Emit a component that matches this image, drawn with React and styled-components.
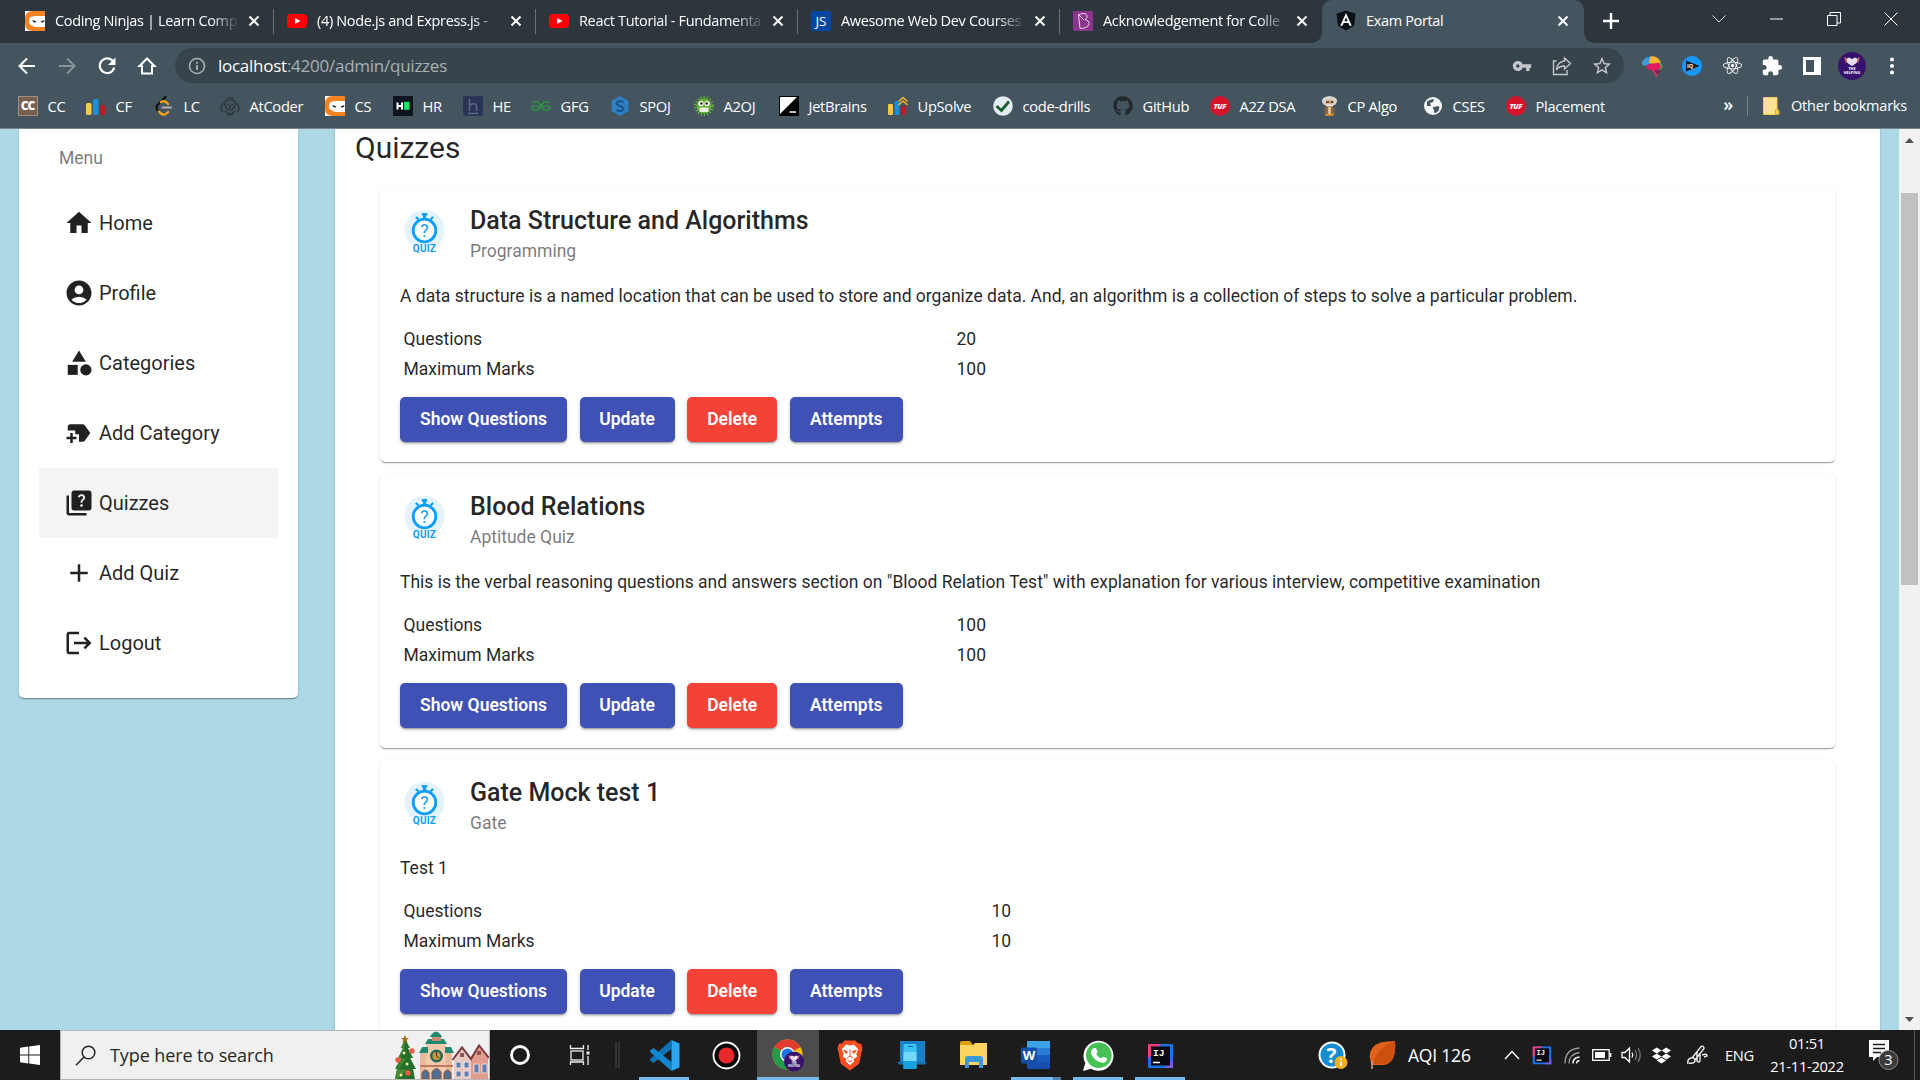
import React from 'react';
import styled, { createGlobalStyle, css } from 'styled-components';
import { MdHome, MdAccountCircle, MdCategory, MdNewLabel, MdQuiz, MdAdd, MdLogout, MdExtension, MdVpnKey, MdStarBorder } from 'react-icons/md';
import { FaDropbox, FaReact, FaGithub } from 'react-icons/fa';
import { SiGeeksforgeeks } from 'react-icons/si';

const GlobalStyle = createGlobalStyle`
  * { box-sizing: border-box; }
  body { margin: 0; overflow: hidden; background: #add8e6; }
  svg { display: block; flex: none; }
`;

const ui = css`
  font-family: 'Open Sans', 'Noto Sans', sans-serif;
  white-space: nowrap;
`;

const Screen = styled.div`
  width: 1920px;
  height: 1080px;
  display: flex;
  flex-direction: column;
  overflow: hidden;
`;

/* ---------- browser chrome ---------- */

const TabStrip = styled.div`
  ${ui}
  height: 43px;
  flex: none;
  display: flex;
  padding-left: 12px;
  background: #2d363c;
  color: #fff;
`;

const Tab = styled.div`
  width: 262px;
  height: 43px;
  display: flex;
  align-items: center;
  padding: 0 ${(p) => (p.$active ? 15 : 14)}px 2px ${(p) => (p.$active ? 14 : 13)}px;
  position: relative;
  background: ${(p) => (p.$active ? '#45555f' : 'transparent')};
  border-radius: 10px 10px 0 0;
  &::after {
    content: '';
    display: ${(p) => (p.$divider ? 'block' : 'none')};
    position: absolute;
    right: 0;
    top: 9px;
    width: 1px;
    height: 25px;
    background: #6b7479;
  }
`;

const TabFoot = styled.span`
  position: absolute;
  bottom: 0;
  ${(p) => (p.$side === 'left' ? 'left: -10px' : 'right: -10px')};
  width: 10px;
  height: 10px;
  background: radial-gradient(circle at ${(p) => (p.$side === 'left' ? '0 0' : '100% 0')}, transparent 9.5px, #45555f 10px);
`;

const TabTitle = styled.span`
  flex: 1;
  min-width: 0;
  margin: 0 8px 0 10px;
  overflow: hidden;
  font-size: 14.5px;
  letter-spacing: -0.34px;
  mask-image: ${(p) => (p.$fade ? 'linear-gradient(to right, #000 84%, transparent 100%)' : 'none')};
`;

const NewTab = styled.div`
  width: 54px;
  display: grid;
  place-items: center;
  padding-bottom: 1px;
`;

const WindowControls = styled.div`
  margin-left: auto;
  display: flex;
  padding-bottom: 5px;
`;

const WindowButton = styled.div`
  width: 57.5px;
  display: grid;
  place-items: center;
`;

const Toolbar = styled.div`
  height: 44px;
  flex: none;
  display: flex;
  align-items: center;
  padding: 1px 8px 0 7px;
  background: #45555f;
`;

const ToolSlot = styled.div`
  width: 40px;
  display: grid;
  place-items: center;
  color: ${(p) => p.$color || '#fff'};
`;

const AddressBar = styled.div`
  ${ui}
  width: 1450px;
  height: 35px;
  margin: 0 8px;
  display: flex;
  align-items: center;
  padding: 0 2px 0 2px;
  border-radius: 18px;
  background: #38444b;
`;

const Url = styled.span`
  flex: 1;
  margin-left: 1px;
  font-size: 17px;
  letter-spacing: -0.25px;
  color: #aab0b4;
  b { font-weight: 400; color: #fff; }
`;

const BookmarkBar = styled.div`
  ${ui}
  height: 42px;
  flex: none;
  display: flex;
  align-items: center;
  padding: 0 0 4px 18px;
  background: #45555f;
  border-bottom: 1px solid #76838b;
  color: #fff;
`;

const Bookmark = styled.div`
  width: ${(p) => p.$w}px;
  flex: none;
  display: flex;
  align-items: center;
  gap: 9.5px;
  font-size: 14.7px;
  letter-spacing: -0.3px;
`;

const BookmarkTail = styled.div`
  margin-left: auto;
  display: flex;
  align-items: center;
  font-size: 14.5px;
  letter-spacing: -0.2px;
  padding-right: 13px;
`;

const Chevrons = styled.span`
  font-size: 18px;
  font-weight: 600;
  padding-bottom: 4px;
  margin-right: 14px;
`;

const TailDivider = styled.span`
  width: 1px;
  height: 20px;
  margin-right: 15px;
  background: #76838b;
`;

const TailLabel = styled.span`
  margin-left: 11px;
`;

/* ---------- page ---------- */

const Viewport = styled.div`
  height: 901px;
  flex: none;
  display: flex;
  overflow: hidden;
  background: #add8e6;
  font-family: Roboto, sans-serif;
  color: rgba(0, 0, 0, 0.87);
`;

const cardShadow = css`
  box-shadow: 0 2px 1px -1px rgba(0, 0, 0, 0.2), 0 1px 1px 0 rgba(0, 0, 0, 0.14), 0 1px 3px 0 rgba(0, 0, 0, 0.12);
`;

const Sidebar = styled.nav`
  ${cardShadow}
  width: 279px;
  height: 569px;
  margin-left: 19px;
  flex: none;
  padding: 0 20px;
  background: #fff;
  border-radius: 0 0 5px 5px;
`;

const MenuLabel = styled.div`
  height: 59px;
  padding: 0 20px;
  line-height: 58px;
  font-size: 17.5px;
  color: rgba(0, 0, 0, 0.54);
`;

const MenuItem = styled.div`
  height: 70px;
  display: flex;
  align-items: center;
  gap: 5px;
  padding-left: 25px;
  font-size: 20px;
  background: ${(p) => (p.$active ? '#f4f4f4' : 'transparent')};
  svg { width: 30px; height: 30px; }
`;

const Main = styled.main`
  ${cardShadow}
  width: 1545px;
  height: 960px;
  margin-left: 37px;
  flex: none;
  padding: 0 45px;
  background: #fff;
`;

const PageTitle = styled.h1`
  height: 59px;
  margin: 0 0 0 -25px;
  line-height: 38px;
  font-size: 30px;
  font-weight: 400;
`;

const QuizList = styled.div`
  display: flex;
  flex-direction: column;
  gap: 12px;
`;

const QuizCard = styled.article`
  ${cardShadow}
  height: 274px;
  flex: none;
  padding: 20px;
  background: #fff;
  border-radius: 5px;
`;

const CardHeader = styled.header`
  display: flex;
  height: 63px;
`;

const Heading = styled.div`
  margin-left: 20px;
`;

const CardTitle = styled.h2`
  margin: 0;
  font-size: 25px;
  font-weight: 500;
  line-height: 25px;
`;

const CardSubtitle = styled.div`
  margin-top: 8px;
  font-size: 17.5px;
  line-height: 20px;
  color: rgba(0, 0, 0, 0.54);
`;

const Description = styled.p`
  margin: 12px 0 15px;
  font-size: 17.5px;
  line-height: 26px;
  white-space: nowrap;
`;

const Facts = styled.dl`
  display: grid;
  grid-template-columns: ${(p) => p.$col}px 1fr;
  margin: 0 0 13px 3.5px;
  font-size: 17.5px;
  line-height: 30px;
  dt, dd { margin: 0; }
`;

const Actions = styled.div`
  display: flex;
  gap: 12.6px;
`;

const ActionButton = styled.button`
  height: 45px;
  width: ${(p) => p.$w}px;
  padding: 0;
  border: 0;
  border-radius: 5px;
  background: ${(p) => (p.$warn ? '#f44336' : '#3f51b5')};
  color: #fff;
  font: 600 17.5px/45px Roboto, sans-serif;
  box-shadow: 0 3px 1px -2px rgba(0, 0, 0, 0.2), 0 2px 2px 0 rgba(0, 0, 0, 0.14), 0 1px 5px 0 rgba(0, 0, 0, 0.12);
`;

const Scrollbar = styled.div`
  width: 21px;
  height: 901px;
  margin-left: auto;
  flex: none;
  display: flex;
  flex-direction: column;
  align-items: center;
  background: #f1f1f1;
`;

const ScrollThumb = styled.div`
  width: 17px;
  height: 392px;
  margin: 50px 0 auto;
  background: #c1c1c1;
`;

const ScrollArrow = styled.svg`
  margin-top: ${(p) => (p.$down ? 0 : 9)}px;
  margin-bottom: ${(p) => (p.$down ? 8 : 0)}px;
`;

/* ---------- taskbar ---------- */

const Taskbar = styled.footer`
  ${ui}
  height: 50px;
  flex: none;
  display: flex;
  background: #1c1c1c;
  color: #fff;
`;

const StartButton = styled.div`
  width: 60px;
  display: grid;
  place-items: center;
`;

const SearchBox = styled.div`
  width: 430px;
  display: flex;
  align-items: center;
  padding-left: 14px;
  border: 1px solid #b5b5b5;
  background: #f0f0f0;
  color: #262626;
  font-size: 18px;
  letter-spacing: -0.1px;
  span { margin-left: 14px; flex: 1; padding-bottom: 1px; }
`;

const ShellSlot = styled.div`
  width: ${(p) => p.$w}px;
  margin-right: ${(p) => p.$mr || 0}px;
  display: grid;
  place-items: center;
`;

const AppSlot = styled.div`
  width: ${(p) => (p.$active ? 62 : 50)}px;
  margin: 0 ${(p) => (p.$active ? 0 : 6)}px;
  display: grid;
  place-items: center;
  background: ${(p) => (p.$active ? '#4c4c4c' : 'transparent')};
  border-bottom: 3px solid ${(p) => (p.$running ? '#76b9ed' : 'transparent')};
  padding-top: 3px;
  ${(p) => p.$stacked && css`border-image: linear-gradient(to right, #76b9ed 80%, #5484a9 80%) 3;`}
`;

const Tray = styled.div`
  margin-left: auto;
  display: flex;
  align-items: center;
  font-size: 17.5px;
`;

const TraySlot = styled.div`
  width: ${(p) => p.$w}px;
  display: grid;
  place-items: center;
`;

const Weather = styled.span`
  width: 91px;
  padding-left: 2px;
  letter-spacing: -0.2px;
`;

const Language = styled.span`
  width: 42px;
  padding-left: 8px;
  font-size: 14.7px;
  letter-spacing: -0.3px;
`;

const Clock = styled.div`
  width: 96px;
  text-align: center;
  font-size: 14.7px;
  line-height: 23px;
  padding-bottom: 1px;
  letter-spacing: -0.3px;
`;

const ShowDesktop = styled.div`
  width: 6px;
  height: 50px;
  border-left: 1px solid #5a5a5a;
`;

/* ---------- glyphs ---------- */

const iconFont = "'Open Sans', sans-serif";

const Ninjas = () => (
  <svg width="20" height="20" viewBox="0 0 20 20">
    <rect width="20" height="20" fill="#fff" />
    <path d="M20 0H8Q0 0 0 8v4q0 8 8 8h12v-4H11q-4 0-4-3V8q0-3 4-3h9z" fill="#f58220" />
    <rect x="4" y="5.500" width="16" height="9" rx="4" fill="#fff" />
    <path d="M7.500 9l4 1.500-1.500 1.300-2-1zM19.500 9l-4 1.500 1.500 1.300 2-1z" fill="#222" />
  </svg>
);

const YouTube = () => (
  <svg width="20" height="20" viewBox="0 0 20 20">
    <rect y="3" width="20" height="14" rx="3.500" fill="#f00" />
    <path d="M8 7l5.500 3L8 13z" fill="#fff" />
  </svg>
);

const JsBadge = () => (
  <svg width="20" height="20" viewBox="0 0 20 20">
    <rect width="20" height="20" rx="2" fill="#0747a1" />
    <text x="10" y="15" fontSize="13.500" textAnchor="middle" fill="#fff" fontFamily={iconFont}>JS</text>
  </svg>
);

const BBadge = () => (
  <svg width="20" height="20" viewBox="0 0 20 20">
    <rect width="20" height="20" fill="#8a348c" />
    <path d="M5.500 3.500L10 2.500q4.500 0 4 3.500-.3 2-2 2.500 4 .5 4 4-.5 4-4.500 4.500L7 17.500zM6 4l5 5" fill="none" stroke="#eacfeb" strokeWidth="1" />
  </svg>
);

const AngularMark = () => (
  <svg width="20" height="21" viewBox="0 0 21 21">
    <path d="M10.500 0L20.500 3.500 19 16l-8.500 5L2 16 .5 3.500z" fill="#0d1016" />
    <path d="M10.500 2.500L4.500 16h2.300l1.200-3h5l1.200 3h2.300zm0 4.500l1.700 4.200H8.800z" fill="#fff" />
  </svg>
);

const Close = () => (
  <svg width="12" height="12" viewBox="0 0 12 12"><path d="M1.500 1.500l9 9M10.500 1.500l-9 9" stroke="#fff" strokeWidth="2" /></svg>
);

const Arrow = ({ flip }) => (
  <svg width="20" height="20" viewBox="0 0 20 20">
    <g transform={flip ? 'rotate(180 10 10)' : undefined} fill="none" stroke="currentColor" strokeWidth="2">
      <path d="M18 10H3M10 2.500L2.500 10l7.500 7.500" />
    </g>
  </svg>
);

const Reload = () => (
  <svg width="20" height="20" viewBox="0 0 20 20">
    <path d="M16.300 5.800A7.300 7.300 0 1 0 17.200 11.500" fill="none" stroke="currentColor" strokeWidth="2.200" />
    <path d="M18.500 1.500v7.500H11z" fill="currentColor" />
  </svg>
);

const HomeOutline = () => (
  <svg width="20" height="20" viewBox="0 0 20 20">
    <path d="M10 2.500L2.500 10H5v7.500h10V10h2.500z" fill="none" stroke="currentColor" strokeWidth="2" />
  </svg>
);

const Info = () => (
  <svg width="18" height="18" viewBox="0 0 18 18" fill="none" stroke="currentColor">
    <circle cx="9" cy="9" r="7.500" strokeWidth="1.600" /><path d="M9 8v5M9 5v1.800" strokeWidth="1.800" />
  </svg>
);

const Share = () => (
  <svg width="20" height="20" viewBox="0 0 20 20" fill="none" stroke="currentColor" strokeWidth="1.400">
    <path d="M4.500 5H1.500v13.500H15V14" /><path d="M12.500 2l6 5.500-6 5.500V10Q7 10 4.500 14 5 6 12.500 5z" />
  </svg>
);

const Brain = () => (
  <svg width="22" height="22" viewBox="0 0 22 22">
    <path d="M1 9Q1 2 10 1.500L9 9l-6 2z" fill="#3f9ad8" />
    <path d="M9.500 1.500Q17 0 20 8l-8 3-4-4z" fill="#f8b72c" />
    <path d="M19 7q4 4 1.500 7l-4 1z" fill="#4aa84c" />
    <path d="M5 12Q7 8 13 8.500l5-1 2 5q-2 3-6 2.500-6 1-9-3z" fill="#e11a61" />
    <path d="M11 15.500h9q-1 3-6 3.500z" fill="#8d1a54" />
    <path d="M12 15l4 6.500" stroke="#e33b50" strokeWidth="1.600" />
  </svg>
);

const PlayBadge = () => (
  <svg width="20" height="20" viewBox="0 0 20 20">
    <circle cx="10" cy="10" r="10" fill="#1798ff" />
    <path d="M4 4.500L17.500 10 4 15.500z" fill="#101820" />
    <text x="8" y="12" fontSize="5.500" fontWeight="700" textAnchor="middle" fill="#fff" fontFamily={iconFont}>IQ</text>
  </svg>
);

const SidePanel = () => (
  <svg width="18" height="18" viewBox="0 0 18 18"><path d="M0 0h18v18H0zM3 3v12h8V3z" fill="#fff" fillRule="evenodd" /></svg>
);

const ProfileBadge = ({ size = 28 }) => (
  <svg width={size} height={size} viewBox="0 0 28 28">
    <circle cx="14" cy="14" r="14" fill="#37116e" />
    <path d="M8 7l3-1.500 3 1.500 3-1.500 3 1.500-1.500 4-4.500 3-4.500-3z" fill="#e6e0ee" />
    <path d="M7 5.500l1.500 5M21 5.500l-1.500 5" stroke="#e76a50" strokeWidth="1.500" />
    <text x="14" y="18" fontSize="3.800" fontWeight="700" textAnchor="middle" fill="#fff" fontFamily={iconFont}>THE</text>
    <text x="14" y="22" fontSize="3.800" fontWeight="700" textAnchor="middle" fill="#fff" fontFamily={iconFont}>HELPING</text>
  </svg>
);

const Dots = () => (
  <svg width="6" height="18" viewBox="0 0 6 18" fill="#fff"><circle cx="3" cy="2.500" r="2" /><circle cx="3" cy="9" r="2" /><circle cx="3" cy="15.500" r="2" /></svg>
);

const CcBadge = () => (
  <svg width="20" height="20" viewBox="0 0 20 20">
    <rect width="20" height="20" fill="#79604e" /><rect x=".5" y=".5" width="19" height="19" fill="none" stroke="#a18d7d" />
    <text x="9.500" y="14" fontSize="12" fontWeight="800" textAnchor="middle" fill="#fff" fontFamily={iconFont} letterSpacing="-1">CC</text>
  </svg>
);

const Bars = () => (
  <svg width="20" height="20" viewBox="0 0 20 20">
    <rect y="7" width="5.500" height="12" rx="1.500" fill="#f7ca48" /><rect x="7" y="3" width="5.500" height="16" rx="1.500" fill="#1b8fd3" /><rect x="14" y="9" width="5.500" height="10" rx="1.500" fill="#b71f28" />
  </svg>
);

const LeetMark = () => (
  <svg width="20" height="20" viewBox="0 0 20 20" fill="none" strokeLinecap="round">
    <path d="M11.500 1L3.500 9q-2 2.500 0 5l2 2" stroke="#111" strokeWidth="2.200" />
    <path d="M7 6q3-2 6 1l1 1M5 15.500l2 2q3 2.500 6-.5l1-1" stroke="#f5a21b" strokeWidth="2.400" />
    <path d="M8.500 11.500H17" stroke="#b3b3b3" strokeWidth="2" />
  </svg>
);

const AtMark = () => (
  <svg width="20" height="20" viewBox="0 0 20 20" fill="none" stroke="#2d373d">
    <path d="M6 3q4-3 8 0M5 5.500q5-3 10 0v4q-1 4-5 4.500-4-.5-5-4.500z" strokeWidth="1.500" />
    <path d="M4 7Q1 9 1 14l2 2M16 7q3 2 3 7l-2 2M7 8.500h2M11 8.500h2M10 9v3M5 15l5 3.500 5-3.500M7 18.500h6" strokeWidth="1.500" />
  </svg>
);

const HrBadge = () => (
  <svg width="20" height="20" viewBox="0 0 20 20">
    <rect width="20" height="20" fill="#0c1420" /><path d="M4.500 6.500v7M9 6.500v7M4.500 10H9" stroke="#fff" strokeWidth="2" /><rect x="11" y="5.800" width="5.500" height="8" fill="#11e868" />
  </svg>
);

const HeBadge = () => (
  <svg width="20" height="20" viewBox="0 0 20 20">
    <rect width="20" height="20" rx="2" fill="#2c3454" /><path d="M6.500 3v12M6.500 9q7-3 7 1.500V15M5 17.500h10" fill="none" stroke="#5c6690" strokeWidth="1.500" />
  </svg>
);

const SpojMark = () => (
  <svg width="20" height="20" viewBox="0 0 20 20">
    <path d="M10 0l8.500 5v10L10 20l-8.500-5V5z" fill="#2f7fc3" /><path d="M13.500 6.500Q10 3.800 7.500 6T10 10t2.500 4.200Q10 16 6.500 13.800" fill="none" stroke="#1c4f86" strokeWidth="2" />
  </svg>
);

const Monster = () => (
  <svg width="20" height="20" viewBox="0 0 20 20">
    <circle cx="10" cy="10" r="7.500" fill="#68b33a" /><circle cx="10" cy="10" r="8.700" fill="none" stroke="#68b33a" strokeWidth="2.400" strokeDasharray="1.300 1.800" />
    <circle cx="7" cy="7.500" r="2.600" fill="#fff" /><circle cx="13" cy="7.500" r="2.600" fill="#fff" /><circle cx="7.300" cy="7.500" r="1.300" fill="#222" /><circle cx="12.700" cy="7.500" r="1.300" fill="#222" />
    <rect x="5.500" y="11.500" width="9" height="4.500" rx="1" fill="#e9f3e0" />
  </svg>
);

const JbMark = () => (
  <svg width="20" height="20" viewBox="0 0 20 20"><rect width="20" height="20" fill="#000" /><path d="M1 1h17L1 18z" fill="#fff" /><path d="M10.500 16h6.500" stroke="#fff" strokeWidth="1.500" /></svg>
);

const UpMark = () => (
  <svg width="20" height="20" viewBox="0 0 20 20">
    <rect y="8" width="5" height="11" rx="1" fill="#f6c544" /><rect x="6.500" y="5" width="5" height="14" rx="1" fill="#1b8fd3" /><rect x="13" y="10" width="5" height="9" rx="1" fill="#b71f28" />
    <path d="M10.500 5.500L15 1.500l4.500 4M10.500 9L15 5l4.500 4" fill="none" stroke="#f3b52e" strokeWidth="1.500" />
  </svg>
);

const CheckMark = () => (
  <svg width="20" height="20" viewBox="0 0 20 20"><circle cx="10" cy="10" r="9.800" fill="#e4eef2" /><path d="M3.500 10l5 4.500L16 5.500" fill="none" stroke="#17602b" strokeWidth="2.800" /></svg>
);

const Tuf = () => (
  <svg width="20" height="20" viewBox="0 0 20 20"><circle cx="10" cy="10" r="10" fill="#d5132b" /><text x="9.800" y="12.800" fontSize="7.500" fontWeight="800" fontStyle="italic" textAnchor="middle" fill="#fff" fontFamily={iconFont}>TUF</text></svg>
);

const Einstein = () => (
  <svg width="17" height="20" viewBox="0 0 17 20">
    <path d="M1 6Q0 1 8.500 0 17 1 16 6l-2 3H3z" fill="#d6d6d2" /><rect x="4.500" y="3.500" width="8" height="7.500" rx="2" fill="#e2b48d" /><path d="M5 6h3M9.500 6h3" stroke="#333" strokeWidth="1.500" /><path d="M5 8.500h7v1.500H5z" fill="#eee" />
    <path d="M3.500 12l3-1.500h4l3 1.500v6h-10z" fill="#8a6540" /><path d="M8.500 11v7" stroke="#e6d3a0" strokeWidth="2.500" /><path d="M4.500 18.800h8" stroke="#e2902f" strokeWidth="2" />
  </svg>
);

const Globe = () => (
  <svg width="20" height="20" viewBox="0 0 20 20"><circle cx="10" cy="10" r="9" fill="#f4f6f7" /><path d="M4 5.500q4-3 7-2.500l-1 3-3 1 1 3H4zM9.500 11.500l5-1.500 2 1-1 4-4 2.500-.5-3.500z" fill="#45555f" /></svg>
);

const Folder = () => (
  <svg width="17" height="20" viewBox="0 0 17 20"><path d="M.5 1.500H14V14l2 1v3.500H.5z" fill="#fde293" stroke="#f2cc4c" /><path d="M12.500 18v-4l3-.5v5z" fill="#f5d869" stroke="#cfa62c" /></svg>
);

const QuizLogo = () => (
  <svg width="50" height="50" viewBox="0 0 50 50">
    <circle cx="24.500" cy="22" r="20" fill="#e3f2fd" />
    <path d="M2 36.500h45v8H2z" fill="#fff" />
    <circle cx="24.500" cy="22.500" r="11.300" fill="#fff" stroke="#0d9dfa" strokeWidth="2.800" />
    <path d="M21.800 5h5.500v2.500h-1.300V10h-3V7.500h-1.200z" fill="#0d9dfa" /><path d="M15.800 9l2.600 2.300M33.200 9l-2.600 2.300" stroke="#0d9dfa" strokeWidth="2.200" />
    <text x="24.500" y="28.700" fontSize="17.500" textAnchor="middle" fill="#0d9dfa" fontFamily="Roboto, sans-serif">?</text>
    <text x="24.500" y="44" fontSize="10" fontWeight="700" letterSpacing=".2" textAnchor="middle" fill="#0d9dfa" fontFamily="Roboto, sans-serif">QUIZ</text>
  </svg>
);

const Windows = () => (
  <svg width="20" height="20" viewBox="0 0 20 20" fill="#fff"><path d="M0 2.800L8.300 1.600v8H0zM9.200 1.500L20 0v9.600H9.200zM0 10.500h8.300v8L0 17.300zM9.200 10.500H20V20L9.200 18.600z" /></svg>
);

const SearchGlyph = () => (
  <svg width="21" height="21" viewBox="0 0 21 21" fill="none" stroke="#222" strokeWidth="1.500"><circle cx="13.500" cy="7.500" r="6.300" /><path d="M9 12L1 20.200" /></svg>
);

const Village = () => (
  <svg width="94" height="48" viewBox="0 0 94 48">
    <path d="M10 8l5 9h-2l5 10h-3l6 11h-3l2 10H0l2-10h-2l6-11H3l5-10H6z" fill="#24702a" />
    <path d="M10 8l-4 9 4 1-5 9 6 1-8 10 9 1-10 9H0l2-10 5-11-3 0 5-10z" fill="#4a8a32" />
    <path d="M10 4l1.300 3H14l-2.200 1.800.8 3L10 10l-2.600 1.800.8-3L6 7h2.700z" fill="#a36f20" />
    <g fill="#ef5a43"><circle cx="17" cy="20" r="2.700" /><circle cx="3" cy="29" r="2.700" /><circle cx="13" cy="42" r="2.700" /></g>
    <g fill="#f8e9a0"><circle cx="9" cy="22" r="1.500" /><circle cx="12" cy="33" r="1.500" /><circle cx="6" cy="44" r="1.500" /></g>
    <path d="M25 22h32v26H25z" fill="#e9b99a" /><path d="M31 13h20v35H31z" fill="#f2c9ac" />
    <path d="M24 22l3-6h6v6zM50 16h6l3 6h-9zM30 13l3-5h16l3 5zM36 4q5-7 10 0l1 2H35z" fill="#1f8a70" />
    <path d="M37 6h9v4h-9z" fill="#c98a72" />
    <circle cx="41.500" cy="25" r="6.500" fill="#23695a" /><circle cx="41.500" cy="25" r="4" fill="#c99a3c" /><path d="M41.500 21v4l2.500 2" stroke="#3c2c14" fill="none" />
    <path d="M25 34h33v2H25z" fill="#c4795f" />
    <path d="M27 48v-6q3.500-6 7 0v6zM37 48v-7q4.500-7 9 0v7zM49 48v-6q3.500-6 7 0v6z" fill="#4f6f94" stroke="#8c4f45" />
    <path d="M59 28l8-11 9 11v20H59z" fill="#e7c9c4" /><path d="M76 26l8-12 9 12v22H76z" fill="#e39d8d" />
    <path d="M57.500 29L67 16.500 76 28l8-13.500L94 27" fill="none" stroke="#7b3740" strokeWidth="2" />
    <path d="M61 31h5v6h-5zM69 31h5v6h-5zM61 40h5v6h-5zM69 40h5v6h-5zM79 33h5v9h-5zM87 33h5v9h-5z" fill="#5c7eb4" stroke="#f2dcd8" />
    <path d="M65 22h4v4h-4zM82 20h4v4h-4z" fill="#90525a" />
  </svg>
);

const Cortana = () => (
  <svg width="22" height="22" viewBox="0 0 22 22"><circle cx="11" cy="11" r="8.500" fill="none" stroke="#fff" strokeWidth="2.800" /></svg>
);

const TaskView = () => (
  <svg width="22" height="20" viewBox="0 0 22 20" fill="none" stroke="#eee" strokeWidth="1.300"><rect x="2" y="6" width="12" height="9" /><path d="M1.500 0v3.500h13V0M1.500 20v-3h13v3M19 0v5M19 11v9" /><path d="M17.500 6.500h3v3h-3z" fill="#eee" stroke="none" /></svg>
);

const Grip = () => (
  <svg width="5" height="26" viewBox="0 0 5 26"><path d="M1 0v26M4 0v26" stroke="#4a4a4a" /></svg>
);

const Code = () => (
  <svg width="31" height="31" viewBox="0 0 31 31">
    <path d="M22.500 0v9L4.500 23 1 20.500v-1.500z" fill="#0d72b5" /><path d="M22.500 31v-9L4.500 8 1 10.500v1.500z" fill="#1486cf" /><path d="M22.500 0L30.500 3.500v24L22.500 31z" fill="#2ba5f0" />
  </svg>
);

const Recorder = () => (
  <svg width="29" height="29" viewBox="0 0 29 29"><circle cx="14.500" cy="14.500" r="13" fill="#080808" stroke="#fff" strokeWidth="1.800" /><circle cx="14.500" cy="14.500" r="8" fill="#e92929" /></svg>
);

const ChromeMark = () => (
  <svg width="32" height="33" viewBox="0 0 32 33">
    <circle cx="15.500" cy="15.500" r="15" fill="#fbc116" />
    <path d="M15.500 15.500L2.500 8A15 15 0 0 1 28.500 8z" fill="#e33b2e" /><path d="M15.500 15.500L2.500 8A15 15 0 0 0 15.500 30.500l4-8z" fill="#24994a" />
    <circle cx="15.500" cy="15.500" r="7.500" fill="#fff" /><circle cx="15.500" cy="15.500" r="6" fill="#1a73e8" />
    <g transform="translate(12 12.500)"><ProfileBadge size={20} /></g>
  </svg>
);

const Brave = () => (
  <svg width="26" height="31" viewBox="0 0 27 31">
    <path d="M8 0h11l3 3 3 0 1.500 5-1 4L23 24l-9.500 7L4 24 1.500 12l-1-4L2 3h3z" fill="#fb4d1f" />
    <path d="M13.500 5l4-1 4.500 5-2 5 1 2.500-4 3 1 2-4.500 4-4.500-4 1-2-4-3L7 14 5 9l4.500-5z" fill="#fff" /><path d="M7 10l4 1.500-1.500 2zM20 10l-4 1.500 1.500 2z" fill="#fb4d1f" stroke="#fb4d1f" /><path d="M13.500 9v7l-3 2M13.500 16l3 2M11 20.500l2.500 1.500 2.500-1.500" fill="none" stroke="#fb4d1f" />
  </svg>
);

const YourPhone = () => (
  <svg width="30" height="30" viewBox="0 0 30 30">
    <path d="M3 1h25v22H3z" fill="#1a7fc6" /><path d="M0 22h30l-2 2.500H2z" fill="#1b6cae" /><rect x="6.500" y="4" width="13" height="25" rx="1" fill="#3cc5f3" /><path d="M6.500 12h13v9h-13z" fill="#72d9f8" /><path d="M6.500 21h13v8h-13z" fill="#18a1e0" /><path d="M11 6.500h5" stroke="#0f5f9e" />
  </svg>
);

const Explorer = () => (
  <svg width="29" height="28" viewBox="0 0 29 28"><path d="M0 2q0-2 2-2h8l3 4H0z" fill="#dfa00d" /><path d="M0 4h13l2-2h12v22H0z" fill="#fcd462" /><path d="M5 24v-6q0-3 3-3h12q3 0 3 3v9h-4v-6H9v6H5z" fill="#3d97dc" /></svg>
);

const Word = () => (
  <svg width="30" height="28" viewBox="0 0 30 28">
    <rect x="6" width="23" height="28" rx="1.500" fill="#174fae" /><path d="M6 0h23v7H6z" fill="#3fa3ea" /><path d="M6 7h23v7H6z" fill="#2b7cd3" /><path d="M6 14h23v7H6z" fill="#185abd" /><rect y="6.500" width="16" height="16" rx="1.500" fill="#1450a8" />
    <text x="8" y="19" fontSize="13" fontWeight="700" textAnchor="middle" fill="#fff" fontFamily={iconFont}>W</text>
  </svg>
);

const WhatsApp = () => (
  <svg width="31" height="31" viewBox="0 0 31 31">
    <path d="M0 31l2.300-8A15 15 0 1 1 8 28.800z" fill="#fff" /><circle cx="15.800" cy="15.200" r="12.800" fill="#46c254" />
    <path d="M11 8l2 0 1.700 4-1.500 2q1.500 3 5 4.500l1.800-2 4 2q0 4-4.500 4.300-8-1-11.500-9.300Q7.500 10 11 8z" fill="#fff" />
  </svg>
);

const IntelliJ = ({ size = 27 }) => (
  <svg width={size} height={size} viewBox="0 0 27 27">
    <path d="M1 2h25v24H1z" fill="#1b72e8" /><path d="M1 2h13L1 17z" fill="#f13a78" /><path d="M17 26h9v-8z" fill="#7d5be8" /><rect x="4" y="4.500" width="19" height="19" fill="#0a0710" />
    <text x="6" y="14" fontSize="9.500" fontWeight="700" fill="#fff" fontFamily="'Liberation Mono', monospace">IJ</text><path d="M6 20.500h7" stroke="#fff" strokeWidth="1.500" />
  </svg>
);

const Help = () => (
  <svg width="31" height="31" viewBox="0 0 31 31">
    <circle cx="14" cy="15" r="13.500" fill="#fff" /><circle cx="14" cy="15" r="11.500" fill="#138cd2" />
    <text x="13.500" y="22.500" fontSize="21" fontWeight="700" textAnchor="middle" fill="#fff" fontFamily={iconFont}>?</text>
    <circle cx="23" cy="22.500" r="6.500" fill="#f7ae1c" /><path d="M23 21.500v4.500M23 18.500v1.800" stroke="#fff" strokeWidth="1.800" />
  </svg>
);

const Leaf = () => (
  <svg width="27" height="29" viewBox="0 0 27 29"><path d="M26 0Q28 24 13 24H3Q-2 14 4 6 9 0 26 0z" fill="#e2611c" /><path d="M26 0Q8 6 4 23h9Q28 24 26 0z" fill="#cc500f" /><path d="M3 20v8" stroke="#c9a99a" strokeWidth="1.500" /></svg>
);

const ChevronUp = () => (
  <svg width="16" height="10" viewBox="0 0 16 10"><path d="M1 9l7-7.500L15 9" fill="none" stroke="#fff" strokeWidth="1.400" /></svg>
);

const Wifi = () => (
  <svg width="17" height="17" viewBox="0 0 17 17" fill="none"><path d="M1 16.500Q1 2 15.500 1M5 16.500Q5 7 15.500 5.500" stroke="#9b9b9b" strokeWidth="1.300" /><path d="M9 16.500q0-6 6.500-6.500M12.500 16.500q0-2.500 3-3" stroke="#fff" strokeWidth="1.400" /></svg>
);

const Battery = () => (
  <svg width="20" height="12" viewBox="0 0 20 12"><rect x=".7" y=".7" width="16.500" height="10.600" fill="none" stroke="#fff" strokeWidth="1.300" /><rect x="3" y="3" width="10" height="6" fill="#fff" /><path d="M18.700 4v4" stroke="#fff" strokeWidth="1.300" /></svg>
);

const Volume = () => (
  <svg width="21" height="18" viewBox="0 0 21 18" fill="none" strokeWidth="1.300"><path d="M1 6.500h3L8.500 2v14L4 11.500H1z" stroke="#fff" /><path d="M11 6.500q1.500 2.500 0 5" stroke="#fff" /><path d="M14 4q3 5 0 10M17 2q4.500 7 0 14" stroke="#777" /></svg>
);

const Pen = () => (
  <svg width="21" height="20" viewBox="0 0 21 20" fill="none" stroke="#eee" strokeWidth="1.400"><path d="M1 19q-1-5 3-6t4 3q-1 3-6 2M5 13L14 1.500q3-1 3 2L8 15M10 7v9q2 2 3 0V8M15 10q5-2 5 1l-3 1" /></svg>
);

const ActionCenter = () => (
  <svg width="31" height="32" viewBox="0 0 31 32">
    <path d="M0 1h20v17H8l-4 4v-4H0z" fill="#fff" /><path d="M4 5.500h12M4 9.500h12M4 13.500h8" stroke="#1c1c1c" strokeWidth="1.300" />
    <circle cx="19.500" cy="21" r="9.500" fill="#3b3b3b" stroke="#8a8a8a" /><text x="19.500" y="26.300" fontSize="14.500" textAnchor="middle" fill="#fff" fontFamily={iconFont}>3</text>
  </svg>
);

/* ---------- data ---------- */

const tabs = [
  { icon: <Ninjas />, title: 'Coding Ninjas | Learn Comp' },
  { icon: <YouTube />, title: '(4) Node.js and Express.js -' },
  { icon: <YouTube />, title: 'React Tutorial - Fundamenta' },
  { icon: <JsBadge />, title: 'Awesome Web Dev Courses' },
  { icon: <BBadge />, title: 'Acknowledgement for Colle' },
];

const bookmarks = [
  [<CcBadge />, 'CC', 68], [<Bars />, 'CF', 68], [<LeetMark />, 'LC', 66], [<AtMark />, 'AtCoder', 105],
  [<Ninjas />, 'CS', 68], [<HrBadge />, 'HR', 70], [<HeBadge />, 'HE', 68],
  [<SiGeeksforgeeks size={20} color="#2f8d46" />, 'GFG', 79], [<SpojMark />, 'SPOJ', 84], [<Monster />, 'A2OJ', 85],
  [<JbMark />, 'JetBrains', 109], [<UpMark />, 'UpSolve', 105], [<CheckMark />, 'code-drills', 120],
  [<FaGithub size={20} color="#24292e" />, 'GitHub', 97], [<Tuf />, 'A2Z DSA', 111], [<Einstein />, 'CP Algo', 102],
  [<Globe />, 'CSES', 83], [<Tuf />, 'Placement', 110],
];

const menu = [
  [MdHome, 'Home'], [MdAccountCircle, 'Profile'], [MdCategory, 'Categories'], [MdNewLabel, 'Add Category'],
  [MdQuiz, 'Quizzes'], [MdAdd, 'Add Quiz'], [MdLogout, 'Logout'],
];

const quizzes = [
  { title: 'Data Structure and Algorithms', category: 'Programming', text: 'A data structure is a named location that can be used to store and organize data. And, an algorithm is a collection of steps to solve a particular problem.', questions: 20, marks: 100, col: 553 },
  { title: 'Blood Relations', category: 'Aptitude Quiz', text: 'This is the verbal reasoning questions and answers section on "Blood Relation Test" with explanation for various interview, competitive examination', questions: 100, marks: 100, col: 553 },
  { title: 'Gate Mock test 1', category: 'Gate', text: 'Test 1', questions: 10, marks: 10, col: 588 },
];

const apps = [
  { icon: <Code />, running: true }, { icon: <Recorder /> }, { icon: <ChromeMark />, running: true, active: true }, { icon: <Brave /> },
  { icon: <YourPhone /> }, { icon: <Explorer /> }, { icon: <Word />, running: true, stacked: true }, { icon: <WhatsApp />, running: true }, { icon: <IntelliJ />, running: true },
];

/* ---------- app ---------- */

const Browser = () => (
  <>
    <TabStrip>
      {tabs.map((t, i) => (
        <Tab key={t.title} $divider={i < 4}>
          {t.icon}
          <TabTitle $fade>{t.title}</TabTitle>
          <Close />
        </Tab>
      ))}
      <Tab $active>
        <TabFoot $side="left" />
        <AngularMark />
        <TabTitle>Exam Portal</TabTitle>
        <Close />
        <TabFoot $side="right" />
      </Tab>
      <NewTab><svg width="16" height="16" viewBox="0 0 16 16"><path d="M8 0v16M0 8h16" stroke="#fff" strokeWidth="2.400" /></svg></NewTab>
      <WindowControls>
        <WindowButton><svg width="14" height="8" viewBox="0 0 14 8"><path d="M.5.5L7 7 13.500.5" fill="none" stroke="#ddd" /></svg></WindowButton>
        <WindowButton><svg width="13" height="2"><path d="M0 1h13" stroke="#fff" /></svg></WindowButton>
        <WindowButton><svg width="14" height="14" viewBox="0 0 14 14" fill="none" stroke="#fff"><path d="M.5 3.500h9.500v10H.5zM3 3.500v-3h10.500v10.500H10" /></svg></WindowButton>
        <WindowButton><svg width="14" height="14" viewBox="0 0 14 14"><path d="M.5.5l13 13M13.500.5l-13 13" stroke="#fff" /></svg></WindowButton>
      </WindowControls>
    </TabStrip>
    <Toolbar>
      <ToolSlot><Arrow /></ToolSlot>
      <ToolSlot $color="#87929a"><Arrow flip /></ToolSlot>
      <ToolSlot><Reload /></ToolSlot>
      <ToolSlot><HomeOutline /></ToolSlot>
      <AddressBar>
        <ToolSlot $color="#aab0b4"><Info /></ToolSlot>
        <Url><b>localhost</b>:4200/admin/quizzes</Url>
        <ToolSlot $color="#c3c7ca"><MdVpnKey size={20} /></ToolSlot>
        <ToolSlot $color="#c3c7ca"><Share /></ToolSlot>
        <ToolSlot $color="#c3c7ca"><MdStarBorder size={22} /></ToolSlot>
      </AddressBar>
      <ToolSlot><Brain /></ToolSlot>
      <ToolSlot><PlayBadge /></ToolSlot>
      <ToolSlot><FaReact size={19} /></ToolSlot>
      <ToolSlot><MdExtension size={22} /></ToolSlot>
      <ToolSlot><SidePanel /></ToolSlot>
      <ToolSlot><ProfileBadge /></ToolSlot>
      <ToolSlot><Dots /></ToolSlot>
    </Toolbar>
    <BookmarkBar>
      {bookmarks.map(([icon, label, w]) => (
        <Bookmark key={label} $w={w}>{icon}<span>{label}</span></Bookmark>
      ))}
      <BookmarkTail>
        <Chevrons>»</Chevrons>
        <TailDivider />
        <Folder />
        <TailLabel>Other bookmarks</TailLabel>
      </BookmarkTail>
    </BookmarkBar>
  </>
);

const Quiz = ({ quiz }) => (
  <QuizCard>
    <CardHeader>
      <QuizLogo />
      <Heading>
        <CardTitle>{quiz.title}</CardTitle>
        <CardSubtitle>{quiz.category}</CardSubtitle>
      </Heading>
    </CardHeader>
    <Description>{quiz.text}</Description>
    <Facts $col={quiz.col}>
      <dt>Questions</dt><dd>{quiz.questions}</dd>
      <dt>Maximum Marks</dt><dd>{quiz.marks}</dd>
    </Facts>
    <Actions>
      <ActionButton $w={167}>Show Questions</ActionButton>
      <ActionButton $w={95}>Update</ActionButton>
      <ActionButton $w={90} $warn>Delete</ActionButton>
      <ActionButton $w={113}>Attempts</ActionButton>
    </Actions>
  </QuizCard>
);

export default function App() {
  return (
    <Screen>
      <GlobalStyle />
      <Browser />
      <Viewport>
        <Sidebar>
          <MenuLabel>Menu</MenuLabel>
          {menu.map(([Icon, label]) => (
            <MenuItem key={label} $active={label === 'Quizzes'}><Icon />{label}</MenuItem>
          ))}
        </Sidebar>
        <Main>
          <PageTitle>Quizzes</PageTitle>
          <QuizList>{quizzes.map((q) => <Quiz key={q.title} quiz={q} />)}</QuizList>
        </Main>
        <Scrollbar>
          <ScrollArrow width="9" height="5" viewBox="0 0 9 5"><path d="M0 5l4.500-5L9 5z" fill="#505050" /></ScrollArrow>
          <ScrollThumb />
          <ScrollArrow $down width="9" height="5" viewBox="0 0 9 5"><path d="M0 0l4.500 5L9 0z" fill="#505050" /></ScrollArrow>
        </Scrollbar>
      </Viewport>
      <Taskbar>
        <StartButton><Windows /></StartButton>
        <SearchBox><SearchGlyph /><span>Type here to search</span><Village /></SearchBox>
        <ShellSlot $w={60}><Cortana /></ShellSlot>
        <ShellSlot $w={60}><TaskView /></ShellSlot>
        <ShellSlot $w={15} $mr={8}><Grip /></ShellSlot>
        {apps.map((a, i) => (
          <AppSlot key={i} $running={a.running} $active={a.active} $stacked={a.stacked}>{a.icon}</AppSlot>
        ))}
        <Tray>
          <TraySlot $w={50}><Help /></TraySlot>
          <TraySlot $w={48}><Leaf /></TraySlot>
          <Weather>AQI 126</Weather>
          <TraySlot $w={30}><ChevronUp /></TraySlot>
          <TraySlot $w={30}><IntelliJ size={20} /></TraySlot>
          <TraySlot $w={30}><Wifi /></TraySlot>
          <TraySlot $w={30}><Battery /></TraySlot>
          <TraySlot $w={28}><Volume /></TraySlot>
          <TraySlot $w={32}><FaDropbox size={19} /></TraySlot>
          <TraySlot $w={40}><Pen /></TraySlot>
          <Language>ENG</Language>
          <Clock>01:51<br />21-11-2022</Clock>
          <TraySlot $w={59}><ActionCenter /></TraySlot>
          <ShowDesktop />
        </Tray>
      </Taskbar>
    </Screen>
  );
}
